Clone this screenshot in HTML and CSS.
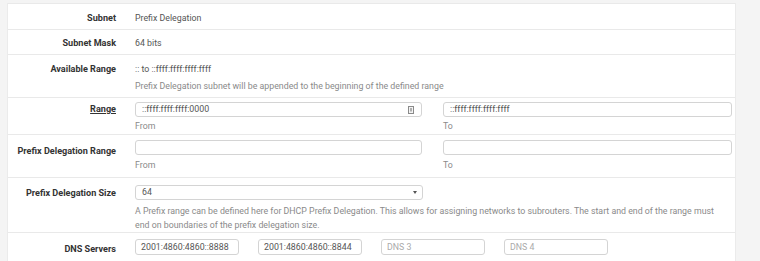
FILE: index.html
```html
<!DOCTYPE html>
<html>
<head>
<meta charset="utf-8">
<link rel="stylesheet" href="styles.css">
</head>
<body>
<div class="page">
  <div class="panel">
    <div class="row r-subnet">
      <div class="label">Subnet</div>
      <div class="content"><div class="static">Prefix Delegation</div></div>
    </div>
    <div class="row r-mask">
      <div class="label">Subnet Mask</div>
      <div class="content"><div class="static">64 bits</div></div>
    </div>
    <div class="row r-avail">
      <div class="label">Available Range</div>
      <div class="content">
        <div class="static">:: to ::ffff:ffff:ffff:ffff</div>
        <div class="help">Prefix Delegation subnet will be appended to the beginning of the defined range</div>
      </div>
    </div>
    <div class="row r-range">
      <div class="label"><span class="u">Range</span></div>
      <div class="content pair">
        <div class="col">
          <div class="input has-icon"><span class="val">::ffff:ffff:ffff:0000</span>
            <svg class="kicon" width="6" height="8" viewBox="0 0 6 8"><rect x="0.5" y="0.5" width="5" height="7" fill="#f4f4f4" stroke="#8a8a8a"/><line x1="3" y1="2" x2="3" y2="5.5" stroke="#6a6a6a"/></svg>
          </div>
          <div class="help">From</div>
        </div>
        <div class="col">
          <div class="input"><span class="val">::ffff:ffff:ffff:ffff</span></div>
          <div class="help">To</div>
        </div>
      </div>
    </div>
    <div class="row r-pdrange">
      <div class="label">Prefix Delegation Range</div>
      <div class="content pair">
        <div class="col">
          <div class="input"></div>
          <div class="help">From</div>
        </div>
        <div class="col">
          <div class="input"></div>
          <div class="help">To</div>
        </div>
      </div>
    </div>
    <div class="row r-pdsize">
      <div class="label">Prefix Delegation Size</div>
      <div class="content">
        <div class="select-wrap">
          <div class="input select"><span class="val">64</span><span class="caret"></span></div>
        </div>
        <div class="help">A Prefix range can be defined here for DHCP Prefix Delegation. This allows for assigning networks to subrouters. The start and end of the range must end on boundaries of the prefix delegation size.</div>
      </div>
    </div>
    <div class="row r-dns">
      <div class="label">DNS Servers</div>
      <div class="content dns">
        <div class="input small"><span class="val">2001:4860:4860::8888</span></div>
        <div class="input small"><span class="val">2001:4860:4860::8844</span></div>
        <div class="input small"><span class="ph">DNS 3</span></div>
        <div class="input small"><span class="ph">DNS 4</span></div>
      </div>
    </div>
  </div>
</div>
</body>
</html>
```

FILE: styles.css
```css
html, body {
  margin: 0;
  padding: 0;
}
body {
  background: #f4f4f4;
  font-family: Roboto, "Liberation Sans", sans-serif;
  font-size: 8.8px;
  line-height: 14px;
  color: #444;
  width: 760px;
  height: 261px;
  overflow: hidden;
}
.page {
  padding-left: 7px;
  padding-top: 3px;
}
.panel {
  width: 727px;
  background: #fff;
  border-left: 1px solid #ebebeb;
  border-right: 1px solid #ebebeb;
}
.row {
  display: flex;
  border-top: 1px solid #e9e9e9;
}
.label {
  width: 108px;
  flex: none;
  text-align: right;
  font-weight: 700;
  font-size: 9.1px;
  color: #333;
}
.u {
  text-decoration: underline;
}
.content {
  margin-left: 19px;
  width: 597px;
}
.static {
  color: #555;
}
.help {
  color: #8a8a8a;
}
.input {
  height: 15px;
  box-sizing: border-box;
  border: 1px solid #d4d4d4;
  border-radius: 3px;
  background: #fff;
  display: flex;
  align-items: center;
  padding-left: 6px;
  color: #555;
  line-height: 13px;
}
.pair {
  display: flex;
  gap: 21px;
}
.pair .col {
  flex: 1;
}
.pair .col:first-child {
  width: 287px;
  flex: none;
}
.has-icon {
  justify-content: space-between;
  padding-right: 7px;
}
.kicon {
  display: block;
}
.select-wrap {
  width: 288px;
}
.select {
  justify-content: space-between;
  padding-right: 5px;
  padding-left: 6px;
}
.caret {
  width: 0;
  height: 0;
  border-left: 2.5px solid transparent;
  border-right: 2.5px solid transparent;
  border-top: 3.5px solid #555;
}
.dns {
  display: flex;
  gap: 19px;
}
.input.small {
  width: 104px;
  flex: none;
  height: 16px;
  padding-left: 5px;
}
.ph {
  color: #aaa;
}

.r-subnet .label, .r-subnet .content { padding: 7px 0 4px; }
.r-mask .label, .r-mask .content { padding: 6px 0 4px; }
.r-avail .label, .r-avail .content { padding: 7px 0 0; }
.r-avail .help { margin-top: 3px; margin-bottom: 4px; }
.r-range .label { padding-top: 4px; }
.r-range .content { padding: 4px 0 1px; }
.r-range .help { margin-top: 2px; }
.r-pdrange .label { padding-top: 9px; }
.r-pdrange .content { padding: 5px 0 5px; }
.r-pdrange .help { margin-top: 3px; }
.r-pdsize .label { padding-top: 8px; }
.r-pdsize .content { padding: 7px 0 0; }
.r-pdsize .help { margin-top: 4px; line-height: 14px; max-width: 588px; }
.r-dns .label { padding-top: 9px; }
.r-dns .content { padding: 6px 0 10px; }
```
